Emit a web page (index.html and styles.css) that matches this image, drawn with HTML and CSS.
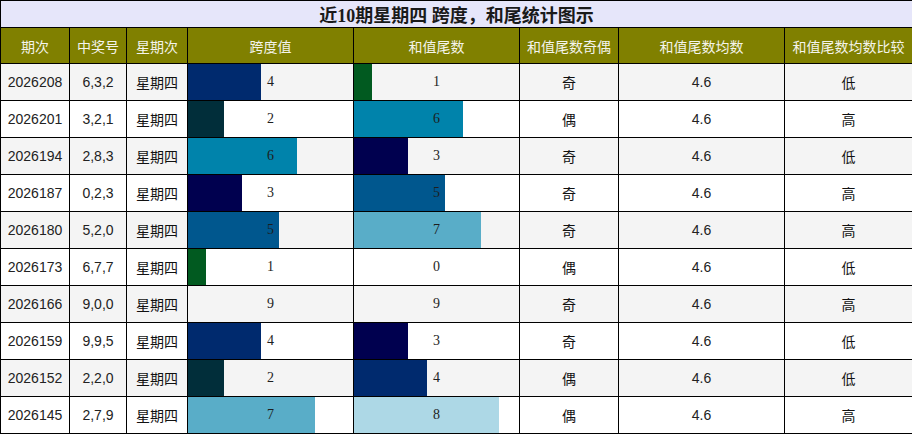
FILE: index.html
```html
<!DOCTYPE html>
<html lang="zh">
<head>
<meta charset="utf-8">
<title>近10期星期四 跨度，和尾统计图示</title>
<link rel="stylesheet" href="styles.css">
</head>
<body>
<table class="stats">
  <colgroup>
    <col class="c-issue"><col class="c-num"><col class="c-week"><col class="c-span"><col class="c-tail"><col class="c-odd"><col class="c-avg"><col class="c-cmp">
  </colgroup>
  <thead>
    <tr class="title-row"><th colspan="8">近10期星期四 跨度，和尾统计图示</th></tr>
    <tr class="head-row">
      <th>期次</th><th>中奖号</th><th>星期次</th><th>跨度值</th><th>和值尾数</th><th>和值尾数奇偶</th><th>和值尾数均数</th><th>和值尾数均数比较</th>
    </tr>
  </thead>
  <tbody>
    <tr class="alt"><td class="issue">2026208</td><td class="num">6,3,2</td><td class="week">星期四</td><td class="bar"><span class="fill v4" style="width:44%"></span><span class="val">4</span></td><td class="bar"><span class="fill v1" style="width:11%"></span><span class="val">1</span></td><td class="cjk">奇</td><td class="avg">4.6</td><td class="cjk">低</td></tr>
    <tr><td class="issue">2026201</td><td class="num">3,2,1</td><td class="week">星期四</td><td class="bar"><span class="fill v2" style="width:22%"></span><span class="val">2</span></td><td class="bar"><span class="fill v6" style="width:66%"></span><span class="val">6</span></td><td class="cjk">偶</td><td class="avg">4.6</td><td class="cjk">高</td></tr>
    <tr class="alt"><td class="issue">2026194</td><td class="num">2,8,3</td><td class="week">星期四</td><td class="bar"><span class="fill v6" style="width:66%"></span><span class="val">6</span></td><td class="bar"><span class="fill v3" style="width:33%"></span><span class="val">3</span></td><td class="cjk">奇</td><td class="avg">4.6</td><td class="cjk">低</td></tr>
    <tr><td class="issue">2026187</td><td class="num">0,2,3</td><td class="week">星期四</td><td class="bar"><span class="fill v3" style="width:33%"></span><span class="val">3</span></td><td class="bar"><span class="fill v5" style="width:55%"></span><span class="val">5</span></td><td class="cjk">奇</td><td class="avg">4.6</td><td class="cjk">高</td></tr>
    <tr class="alt"><td class="issue">2026180</td><td class="num">5,2,0</td><td class="week">星期四</td><td class="bar"><span class="fill v5" style="width:55%"></span><span class="val">5</span></td><td class="bar"><span class="fill v7" style="width:77%"></span><span class="val">7</span></td><td class="cjk">奇</td><td class="avg">4.6</td><td class="cjk">高</td></tr>
    <tr><td class="issue">2026173</td><td class="num">6,7,7</td><td class="week">星期四</td><td class="bar"><span class="fill v1" style="width:11%"></span><span class="val">1</span></td><td class="bar"><span class="val">0</span></td><td class="cjk">偶</td><td class="avg">4.6</td><td class="cjk">低</td></tr>
    <tr class="alt"><td class="issue">2026166</td><td class="num">9,0,0</td><td class="week">星期四</td><td class="bar"><span class="val">9</span></td><td class="bar"><span class="val">9</span></td><td class="cjk">奇</td><td class="avg">4.6</td><td class="cjk">高</td></tr>
    <tr><td class="issue">2026159</td><td class="num">9,9,5</td><td class="week">星期四</td><td class="bar"><span class="fill v4" style="width:44%"></span><span class="val">4</span></td><td class="bar"><span class="fill v3" style="width:33%"></span><span class="val">3</span></td><td class="cjk">奇</td><td class="avg">4.6</td><td class="cjk">低</td></tr>
    <tr class="alt"><td class="issue">2026152</td><td class="num">2,2,0</td><td class="week">星期四</td><td class="bar"><span class="fill v2" style="width:22%"></span><span class="val">2</span></td><td class="bar"><span class="fill v4" style="width:44%"></span><span class="val">4</span></td><td class="cjk">偶</td><td class="avg">4.6</td><td class="cjk">低</td></tr>
    <tr><td class="issue">2026145</td><td class="num">2,7,9</td><td class="week">星期四</td><td class="bar"><span class="fill v7" style="width:77%"></span><span class="val">7</span></td><td class="bar"><span class="fill v8" style="width:88%"></span><span class="val">8</span></td><td class="cjk">偶</td><td class="avg">4.6</td><td class="cjk">高</td></tr>
  </tbody>
</table>
</body>
</html>
```
FILE: styles.css
```css
html, body {
  margin: 0;
  padding: 0;
  background: #ffffff;
}

.stats {
  width: 912px;
  table-layout: fixed;
  border-collapse: collapse;
  font-family: "Liberation Sans", "Noto Sans CJK SC", sans-serif;
  color: #222222;
}

.c-issue { width: 69px; }
.c-num { width: 57px; }
.c-week { width: 61px; }
.c-span { width: 166px; }
.c-tail { width: 166px; }
.c-odd { width: 99px; }
.c-avg { width: 166px; }
.c-cmp { width: 128px; }

.stats th,
.stats td {
  border: 1px solid #000000;
  padding: 0;
  text-align: center;
  vertical-align: middle;
}

.title-row th {
  height: 26px;
  background: #e6e6fa;
  color: #1a1a1a;
  font-family: "Liberation Serif", "Noto Sans CJK SC", serif;
  font-size: 18px;
  font-weight: bold;
}

.head-row th {
  height: 35px;
  background: #808000;
  color: #f4f4ec;
  font-family: "Noto Sans CJK SC", sans-serif;
  font-size: 14px;
  font-weight: normal;
}

.stats td {
  height: 36px;
  font-size: 14px;
}

.stats tr.alt td {
  background: #f4f4f4;
}

.issue,
.num,
.avg {
  font-family: "Liberation Sans", sans-serif;
  font-size: 14px;
  color: #222222;
}

.week,
.cjk {
  font-family: "Noto Sans CJK SC", sans-serif;
  font-size: 15px;
  color: #111111;
}

.bar {
  position: relative;
  font-family: "Liberation Serif", serif;
  font-size: 16px;
}

.fill {
  position: absolute;
  left: 0;
  top: 0;
  bottom: 0;
}

.val {
  position: relative;
  color: #1e1e1e;
}

.v1 { background: #015a20; }
.v2 { background: #012e3a; }
.v3 { background: #00004f; }
.v4 { background: #002a6e; }
.v5 { background: #00578e; }
.v6 { background: #0083ab; }
.v7 { background: #59adc8; }
.v8 { background: #add8e6; }
```
